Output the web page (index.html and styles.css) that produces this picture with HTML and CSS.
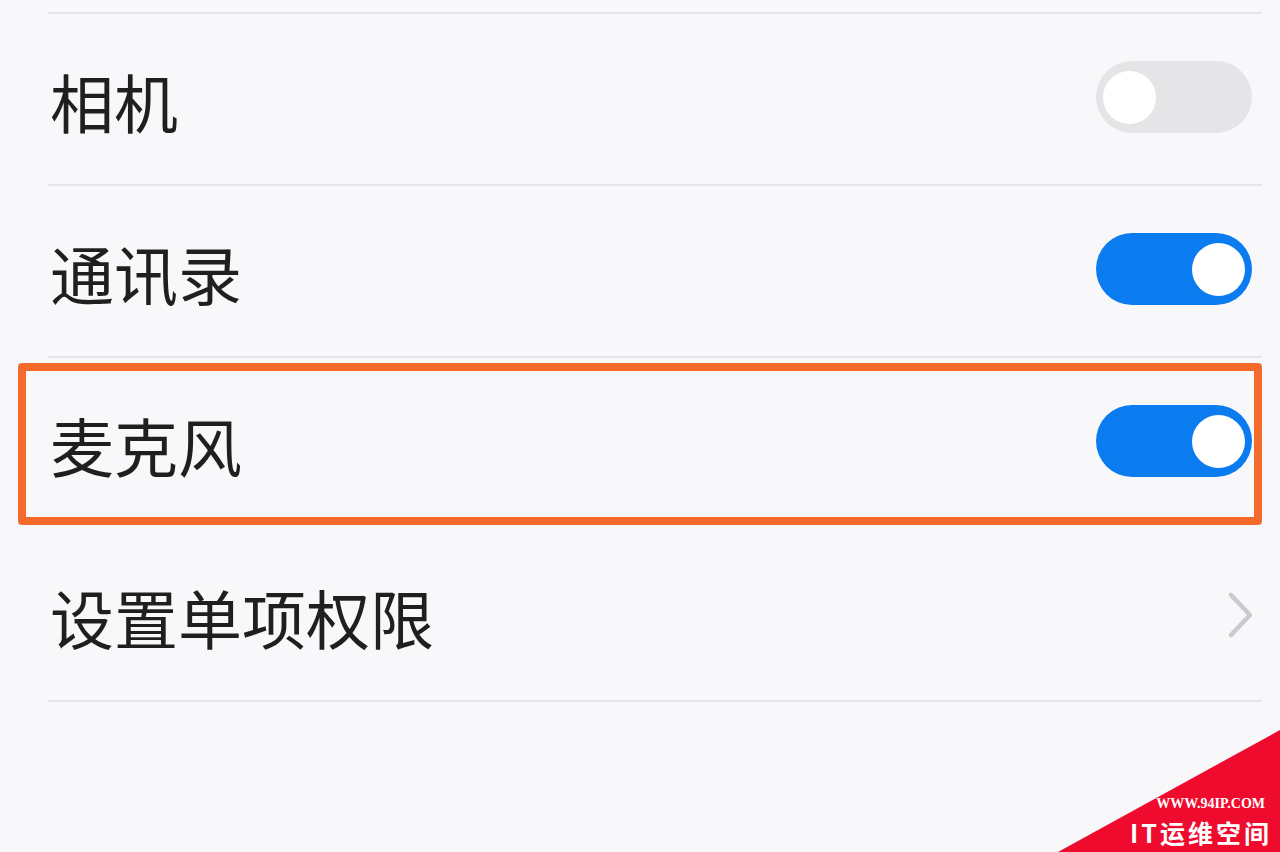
FILE: index.html
```html
<!DOCTYPE html>
<html lang="zh-CN">
<head>
    <meta charset="UTF-8">
    <meta name="viewport" content="width=device-width, initial-scale=1.0">
    <title>权限管理</title>
    <link rel="stylesheet" href="styles.css">
</head>
<body>
    <div class="list">
        <div class="row">
            <span class="label">相机</span>
            <span class="switch"><span class="knob"></span></span>
        </div>
        <div class="row">
            <span class="label">通讯录</span>
            <span class="switch on"><span class="knob"></span></span>
        </div>
        <div class="row no-line">
            <span class="label">麦克风</span>
            <span class="switch on"><span class="knob"></span></span>
        </div>
        <div class="row">
            <span class="label">设置单项权限</span>
            <svg class="chevron" width="30" height="48" viewBox="0 0 30 48">
                <path d="M5 4 L24 24 L5 44" fill="none" stroke="#cbcbcd" stroke-width="4.5" stroke-linecap="round" stroke-linejoin="round"/>
            </svg>
        </div>
    </div>

    <div class="highlight"></div>

    <div class="watermark">
        <div class="wm-url">WWW.94IP.COM</div>
        <div class="wm-name">IT运维空间</div>
    </div>
</body>
</html>
```

FILE: styles.css
```css
body {
    margin: 0;
    height: 852px;
    overflow: hidden;
    background: #f8f8fa;
    font-family: "Noto Sans CJK SC", "Noto Sans", sans-serif;
    position: relative;
}
.list {
    margin: 12px 18px 0 48px;
    border-top: 2px solid #e6e6e9;
}
.row {
    height: 170px;
    display: flex;
    align-items: center;
    justify-content: space-between;
    padding-right: 10px;
    border-bottom: 2px solid #e6e6e9;
}
.row.no-line {
    border-bottom-color: transparent;
}
.label {
    font-size: 64px;
    color: #1f1f1f;
    padding-left: 2px;
    padding-top: 2px;
}
.switch {
    width: 156px;
    height: 72px;
    box-sizing: border-box;
    border-radius: 36px;
    background: #e5e5e8;
    display: flex;
    align-items: center;
    padding: 0 7px;
    margin-top: -4px;
}
.switch.on {
    background: #0a7cf0;
    justify-content: flex-end;
}
.knob {
    width: 53px;
    height: 53px;
    border-radius: 50%;
    background: #fff;
}
.chevron {
    margin-right: -4px;
}
.highlight {
    position: absolute;
    left: 18px;
    top: 363px;
    width: 1244px;
    height: 162px;
    box-sizing: border-box;
    border: 8px solid #f36a2b;
    border-radius: 4px;
}
.watermark {
    position: absolute;
    right: 0;
    bottom: 0;
    width: 222px;
    height: 122px;
    background: #ef0b2d;
    clip-path: polygon(0 100%, 100% 0, 100% 100%);
    display: flex;
    flex-direction: column;
    align-items: flex-end;
    justify-content: flex-end;
    color: #fff;
    padding: 0 8px 4px 0;
    box-sizing: border-box;
}
.wm-url {
    font-family: "Liberation Serif", serif;
    font-weight: bold;
    font-size: 14px;
    margin-right: 7px;
    margin-bottom: 4px;
}
.wm-name {
    font-weight: bold;
    font-size: 25px;
    letter-spacing: 3px;
    line-height: 32px;
}
```
